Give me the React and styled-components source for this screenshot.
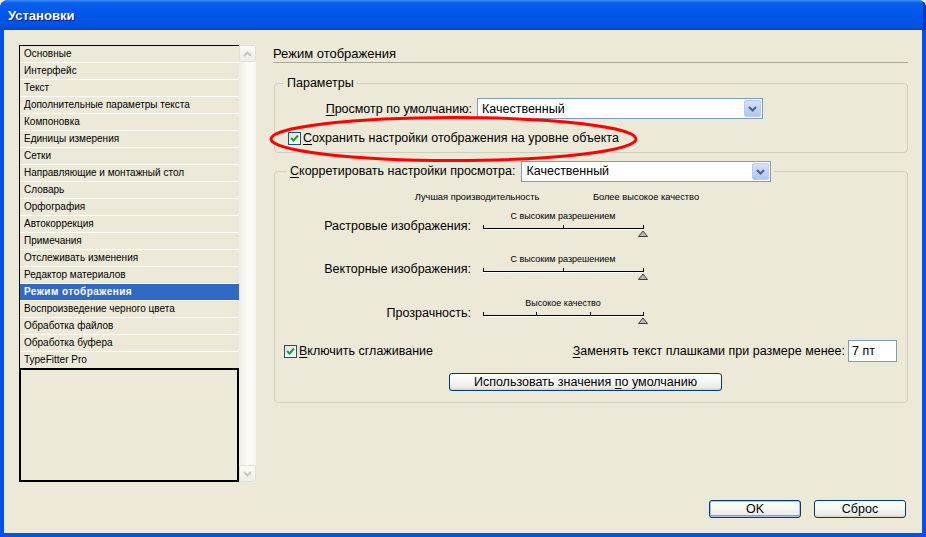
import styled, { createGlobalStyle } from "styled-components";

const GlobalStyle = createGlobalStyle`
  html, body {
    margin: 0;
    padding: 0;
    background: #ECE9D8;
  }
  body {
    font-family: "Liberation Sans", Arial, sans-serif;
    color: #000;
  }
  * {
    box-sizing: border-box;
  }
`;

const Window = styled.div`
  width: 926px;
  height: 537px;
  display: flex;
  flex-direction: column;
  border-radius: 8px 8px 0 0;
  overflow: hidden;
  background: #0054e3;
`;

const TitleBar = styled.div`
  height: 30px;
  flex: none;
  display: flex;
  align-items: center;
  padding-left: 8px;
  background: linear-gradient(
    180deg,
    #3d8df9 0px,
    #0a5eeb 3px,
    #0056e8 50%,
    #0053e2 85%,
    #0046d0 100%
  );
  box-shadow: inset -3px 0 0 #0a33c0;
  color: #fff;
  font-weight: bold;
  font-size: 13px;
  text-shadow: 1px 1px 0 #0a1883;
`;

const Body = styled.div`
  flex: 1;
  margin: 0 4px 4px 4px;
  background: #ece9d8;
  display: grid;
  grid-template-columns: 237px 635px;
  grid-template-rows: 437px auto;
  column-gap: 17px;
  row-gap: 18px;
  padding: 15px 14px 0 15px;
`;

/* ---------- left list ---------- */

const List = styled.div`
  display: flex;
  height: 437px;
`;

const Items = styled.div`
  width: 220px;
  display: flex;
  flex-direction: column;
  border-top: 1px solid #000;
  border-left: 1px solid #000;
`;

const Item = styled.div`
  height: 17px;
  flex: none;
  line-height: 16px;
  padding-left: 4px;
  font-size: 10px;
  border-bottom: 1px solid #fff;
  white-space: nowrap;
  background: ${(p) => (p.$active ? "#316ac5" : "#ece9d8")};
  color: ${(p) => (p.$active ? "#fff" : "#000")};
  font-weight: ${(p) => (p.$active ? "bold" : "normal")};
  letter-spacing: ${(p) => (p.$active ? "0.45px" : "0")};
`;

const EmptyArea = styled.div`
  flex: 1;
  margin-left: -1px;
  margin-top: -1px;
  border: 2px solid #000;
`;

const Scrollbar = styled.div`
  width: 17px;
  display: flex;
  flex-direction: column;
  justify-content: space-between;
  background: linear-gradient(90deg, #eeede5 0%, #fdfdfb 60%, #f7f6f1 100%);
`;

const ScrollBtn = styled.div`
  width: 17px;
  height: 17px;
  display: flex;
  align-items: center;
  justify-content: center;
  border: 1px solid #e3e1d6;
  border-radius: 2px;
  background: linear-gradient(180deg, #fbfbf8, #eeede6);
`;

/* ---------- right panel ---------- */

const Panel = styled.div`
  position: relative;
  display: flex;
  flex-direction: column;
  font-size: 12.5px;
`;

const PanelTitle = styled.div`
  height: 18px;
  font-size: 13px;
  line-height: 17px;
  border-bottom: 1px solid #aca899;
`;

const Group = styled.fieldset`
  margin: ${(p) => p.$mt}px 0 0 1px;
  padding: 0 0 ${(p) => p.$pb}px 0;
  border: 1px solid #d0d0bf;
  border-radius: 4px;
  min-width: 0;
`;

const Legend = styled.legend`
  margin-left: ${(p) => p.$ml}px;
  padding: 0 3px;
  font-size: 12.5px;
  line-height: 15px;
  display: flex;
  align-items: center;
  gap: 6px;
`;

const FieldRow = styled.div`
  display: grid;
  grid-template-columns: 197px 286px;
  column-gap: 5px;
  align-items: center;
  margin-top: 7px;
  height: 21px;
`;

const RightLabel = styled.span`
  text-align: right;
  white-space: nowrap;
`;

const CheckRow = styled.label`
  display: flex;
  align-items: center;
  gap: 2px;
  height: 14px;
  margin: ${(p) => p.$mt || 0}px 0 0 ${(p) => p.$ml}px;
  white-space: nowrap;
`;

const Box = styled.span`
  width: 13px;
  height: 13px;
  flex: none;
  border: 1px solid #1c5180;
  background: linear-gradient(135deg, #dcdcd7, #fff 80%);
  display: flex;
  align-items: center;
  justify-content: center;
`;

const U = styled.span`
  text-decoration: underline;
  text-underline-offset: 2px;
`;

const SelectBox = styled.div`
  width: ${(p) => p.$w}px;
  height: 21px;
  display: flex;
  align-items: center;
  justify-content: space-between;
  background: #fff;
  border: 1px solid #7f9db9;
  font-size: 12.5px;
  padding-left: 4px;
`;

const DropBtn = styled.span`
  width: 17px;
  height: 17px;
  margin-right: 1px;
  border-radius: 2px;
  border: 1px solid #bbcbf0;
  background: linear-gradient(180deg, #d6e1fb 0%, #c1d2f8 50%, #b2c6f4 100%);
  display: flex;
  align-items: center;
  justify-content: center;
`;

const HeaderRow = styled.div`
  display: flex;
  gap: 9px;
  margin-top: 9px;
  padding-left: 122px;
`;

const HeaderCell = styled.span`
  width: 160px;
  text-align: center;
  font-size: 9.3px;
  line-height: 12px;
  white-space: nowrap;
`;

const SliderRow = styled.div`
  display: grid;
  grid-template-columns: 196px 170px;
  column-gap: 9px;
  margin-top: ${(p) => p.$mt}px;
`;

const SliderLabel = styled.span`
  margin-top: 8px;
  text-align: right;
  line-height: 16px;
  white-space: nowrap;
`;

const SliderBox = styled.div`
  width: 166px;
  display: flex;
  flex-direction: column;
`;

const SliderCaption = styled.span`
  font-size: 9px;
  line-height: 12px;
  text-align: center;
  white-space: nowrap;
`;

const BottomRow = styled.div`
  display: flex;
  align-items: center;
  justify-content: space-between;
  height: 22px;
  margin-top: 16px;
  padding: 0 10px 0 9px;
`;

const SizeField = styled.div`
  display: flex;
  align-items: center;
  gap: 3px;
  white-space: nowrap;
`;

const SizeInput = styled.div`
  width: 49px;
  height: 22px;
  background: #fff;
  border: 1px solid #7f9db9;
  padding-left: 3px;
  line-height: 20px;
`;

const ButtonRow = styled.div`
  margin-top: 11px;
  padding-left: 174px;
`;

const Button = styled.button`
  width: ${(p) => p.$w}px;
  height: 18px;
  padding: 0;
  font-family: inherit;
  font-size: 12.5px;
  line-height: 16px;
  color: #000;
  border: 1px solid #003c74;
  border-radius: 3px;
  background: linear-gradient(180deg, #ffffff 0%, #f6f6f3 50%, #ecebe5 85%, #d6d0c5 100%);
  box-shadow: ${(p) => (p.$default ? "inset 0 0 0 1px #a9c2f4, inset 0 -1px 0 1px #7d9fe6" : "none")};
`;

const Footer = styled.div`
  grid-column: 1 / -1;
  display: flex;
  justify-content: flex-end;
  gap: 13px;
  padding-right: 2px;
`;

const Ellipse = styled.svg`
  position: absolute;
  left: -4px;
  top: 71px;
  overflow: visible;
  pointer-events: none;
`;

const Check = () => (
  <svg width="9" height="9" viewBox="0 0 9 9">
    <polyline points="1,4 3.5,6.5 8,1.5" fill="none" stroke="#21a121" strokeWidth="2" />
  </svg>
);

const Chevron = ({ color = "#4d6185", up }) => (
  <svg width="9" height="6" viewBox="0 0 9 6">
    <polyline
      points={up ? "1,5 4.5,1.5 8,5" : "1,1 4.5,4.5 8,1"}
      fill="none"
      stroke={color}
      strokeWidth="2"
    />
  </svg>
);

const Select = ({ w, value }) => (
  <SelectBox $w={w}>
    <span>{value}</span>
    <DropBtn>
      <Chevron />
    </DropBtn>
  </SelectBox>
);

const Slider = ({ caption, ticks }) => (
  <SliderBox>
    <SliderCaption>{caption}</SliderCaption>
    <svg width="170" height="15" viewBox="0 0 170 15" style={{ display: "block" }}>
      <line x1="3" y1="6.5" x2="163" y2="6.5" stroke="#000" />
      <line x1="3" y1="7.5" x2="163" y2="7.5" stroke="#fff" />
      {ticks.map((t) => (
        <line key={t} x1={t + 0.5} y1="3" x2={t + 0.5} y2="7" stroke="#000" />
      ))}
      <polygon points="163,9 158.5,14.5 167.5,14.5" fill="#b8b8b0" stroke="#404040" />
    </svg>
  </SliderBox>
);

const items = [
  "Основные",
  "Интерфейс",
  "Текст",
  "Дополнительные параметры текста",
  "Компоновка",
  "Единицы измерения",
  "Сетки",
  "Направляющие и монтажный стол",
  "Словарь",
  "Орфография",
  "Автокоррекция",
  "Примечания",
  "Отслеживать изменения",
  "Редактор материалов",
  "Режим отображения",
  "Воспроизведение черного цвета",
  "Обработка файлов",
  "Обработка буфера",
  "TypeFitter Pro",
];

export default function App() {
  return (
    <>
      <GlobalStyle />
      <Window>
        <TitleBar>Установки</TitleBar>
        <Body>
          <List>
            <Items>
              {items.map((it) => (
                <Item key={it} $active={it === "Режим отображения"}>
                  {it}
                </Item>
              ))}
              <EmptyArea />
            </Items>
            <Scrollbar>
              <ScrollBtn>
                <Chevron up color="#c9c7ba" />
              </ScrollBtn>
              <ScrollBtn>
                <Chevron color="#c9c7ba" />
              </ScrollBtn>
            </Scrollbar>
          </List>

          <Panel>
            <PanelTitle>Режим отображения</PanelTitle>

            <Group $mt={13} $pb={7}>
              <Legend $ml={9}>Параметры</Legend>
              <FieldRow>
                <RightLabel>
                  <U>П</U>росмотр по умолчанию:
                </RightLabel>
                <Select w={286} value="Качественный" />
              </FieldRow>
              <CheckRow $mt={12} $ml={13}>
                <Box>
                  <Check />
                </Box>
                <span>
                  <U>С</U>охранить настройки отображения на уровне объекта
                </span>
              </CheckRow>
            </Group>

            <Group $mt={8} $pb={11}>
              <Legend $ml={12}>
                <span>
                  <U>С</U>корретировать настройки просмотра:
                </span>
                <Select w={250} value="Качественный" />
              </Legend>
              <HeaderRow>
                <HeaderCell>Лучшая производительность</HeaderCell>
                <HeaderCell>Более высокое качество</HeaderCell>
              </HeaderRow>
              <SliderRow $mt={7}>
                <SliderLabel>Растровые изображения:</SliderLabel>
                <Slider caption="С высоким разрешением" ticks={[3, 83, 163]} />
              </SliderRow>
              <SliderRow $mt={16}>
                <SliderLabel>Векторные изображения:</SliderLabel>
                <Slider caption="С высоким разрешением" ticks={[3, 83, 163]} />
              </SliderRow>
              <SliderRow $mt={17}>
                <SliderLabel>Прозрачность:</SliderLabel>
                <Slider caption="Высокое качество" ticks={[3, 56, 110, 163]} />
              </SliderRow>
              <BottomRow>
                <CheckRow $ml={0}>
                  <Box>
                    <Check />
                  </Box>
                  <span>
                    <U>В</U>ключить сглаживание
                  </span>
                </CheckRow>
                <SizeField>
                  <span>
                    <U>З</U>аменять текст плашками при размере менее:
                  </span>
                  <SizeInput>7 пт</SizeInput>
                </SizeField>
              </BottomRow>
              <ButtonRow>
                <Button $w={273}>
                  Использовать значения <U>п</U>о умолчанию
                </Button>
              </ButtonRow>
            </Group>

            <Ellipse width="369" height="46" viewBox="0 0 369 46">
              <ellipse cx="184.5" cy="23" rx="182.5" ry="21.5" fill="none" stroke="#ff0000" strokeWidth="3" />
            </Ellipse>
          </Panel>

          <Footer>
            <Button $w={92} $default>
              OK
            </Button>
            <Button $w={92}>Сброс</Button>
          </Footer>
        </Body>
      </Window>
    </>
  );
}
